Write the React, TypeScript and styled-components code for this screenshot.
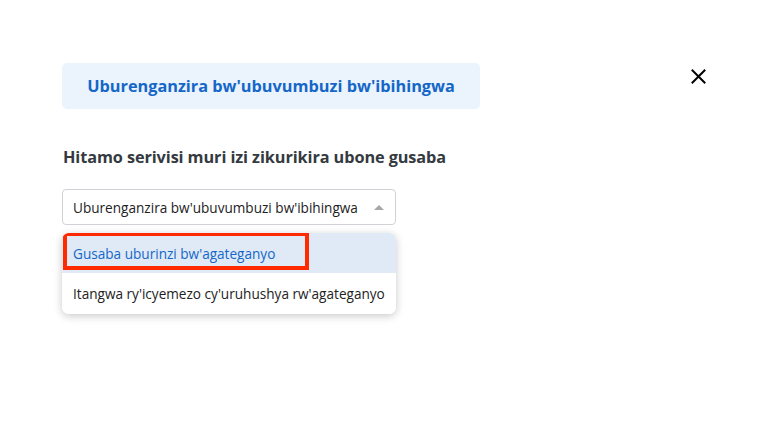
import React from "react";
import styled, { createGlobalStyle } from "styled-components";

const Global = createGlobalStyle`
  html, body { margin: 0; padding: 0; background: #ffffff; }
  body { font-family: "Open Sans", Lato, sans-serif; width: 767px; height: 423px; overflow: hidden; }
`;

const Page = styled.div`
  padding: 63px 60px 0 62px;
  display: flex;
  flex-direction: column;
`;

const Header = styled.div`
  display: flex;
  align-items: flex-start;
  justify-content: space-between;
`;

const Close = styled.button`
  width: 17px;
  height: 17px;
  margin-top: 5px;
  padding: 0;
  border: 0;
  background: transparent;
  display: flex;
  align-items: center;
  justify-content: center;
`;

const TitleBox = styled.div`
  width: 418px;
  height: 46px;
  box-sizing: border-box;
  background: #ebf3fc;
  border-radius: 5px;
  display: flex;
  align-items: center;
  justify-content: center;
  font-size: 16.3px;
  font-weight: 700;
  color: #1467c8;
`;

const Heading = styled.h2`
  margin: 36px 0 0 1px;
  font-size: 16.3px;
  font-weight: 700;
  color: #343a40;
  line-height: 24px;
  letter-spacing: -0.1px;
`;

const SelectWrap = styled.div`
  position: relative;
  width: 334px;
  margin-top: 20px;
`;

const SelectBox = styled.div`
  height: 36px;
  box-sizing: border-box;
  border: 1px solid #cfd3d7;
  border-radius: 4px;
  display: flex;
  align-items: center;
  justify-content: space-between;
  padding: 0 11px 0 10px;
  font-size: 13.6px;
  color: #222;
`;

const Arrow = styled.span`
  width: 0;
  height: 0;
  border-left: 5px solid transparent;
  border-right: 5px solid transparent;
  border-bottom: 5px solid #a8a8a8;
`;

const Menu = styled.div`
  position: absolute;
  top: 44px;
  left: 0;
  width: 334px;
  background: #fff;
  border-radius: 7px;
  box-shadow: 0 2px 8px rgba(0, 0, 0, 0.22);
  overflow: hidden;
  display: flex;
  flex-direction: column;
`;

const Option = styled.div<{ $active?: boolean }>`
  position: relative;
  height: ${(p) => (p.$active ? 40 : 41)}px;
  display: flex;
  align-items: center;
  padding-left: 11px;
  font-size: 13.6px;
  background: ${(p) => (p.$active ? "#dfeaf6" : "#fff")};
  color: ${(p) => (p.$active ? "#1467c8" : "#222")};
`;

const Highlight = styled.span`
  position: absolute;
  top: -1px;
  left: 1px;
  width: 246px;
  height: 38px;
  box-sizing: border-box;
  border: 4px solid #ff2a00;
`;

export default function App() {
  return (
    <>
      <Global />
      <Page>
        <Header>
          <TitleBox>Uburenganzira bw'ubuvumbuzi bw'ibihingwa</TitleBox>
          <Close aria-label="close">
            <svg width="15" height="15" viewBox="0 0 15 15">
              <path d="M1.5 1.5 L13.5 13.5 M13.5 1.5 L1.5 13.5" stroke="#000" strokeWidth="2" strokeLinecap="square" />
            </svg>
          </Close>
        </Header>
        <Heading>Hitamo serivisi muri izi zikurikira ubone gusaba</Heading>
        <SelectWrap>
          <SelectBox>
            <span>Uburenganzira bw'ubuvumbuzi bw'ibihingwa</span>
            <Arrow />
          </SelectBox>
          <Menu>
            <Option $active>
              Gusaba uburinzi bw'agateganyo
              <Highlight />
            </Option>
            <Option>Itangwa ry'icyemezo cy'uruhushya rw'agateganyo</Option>
          </Menu>
        </SelectWrap>
      </Page>
    </>
  );
}
